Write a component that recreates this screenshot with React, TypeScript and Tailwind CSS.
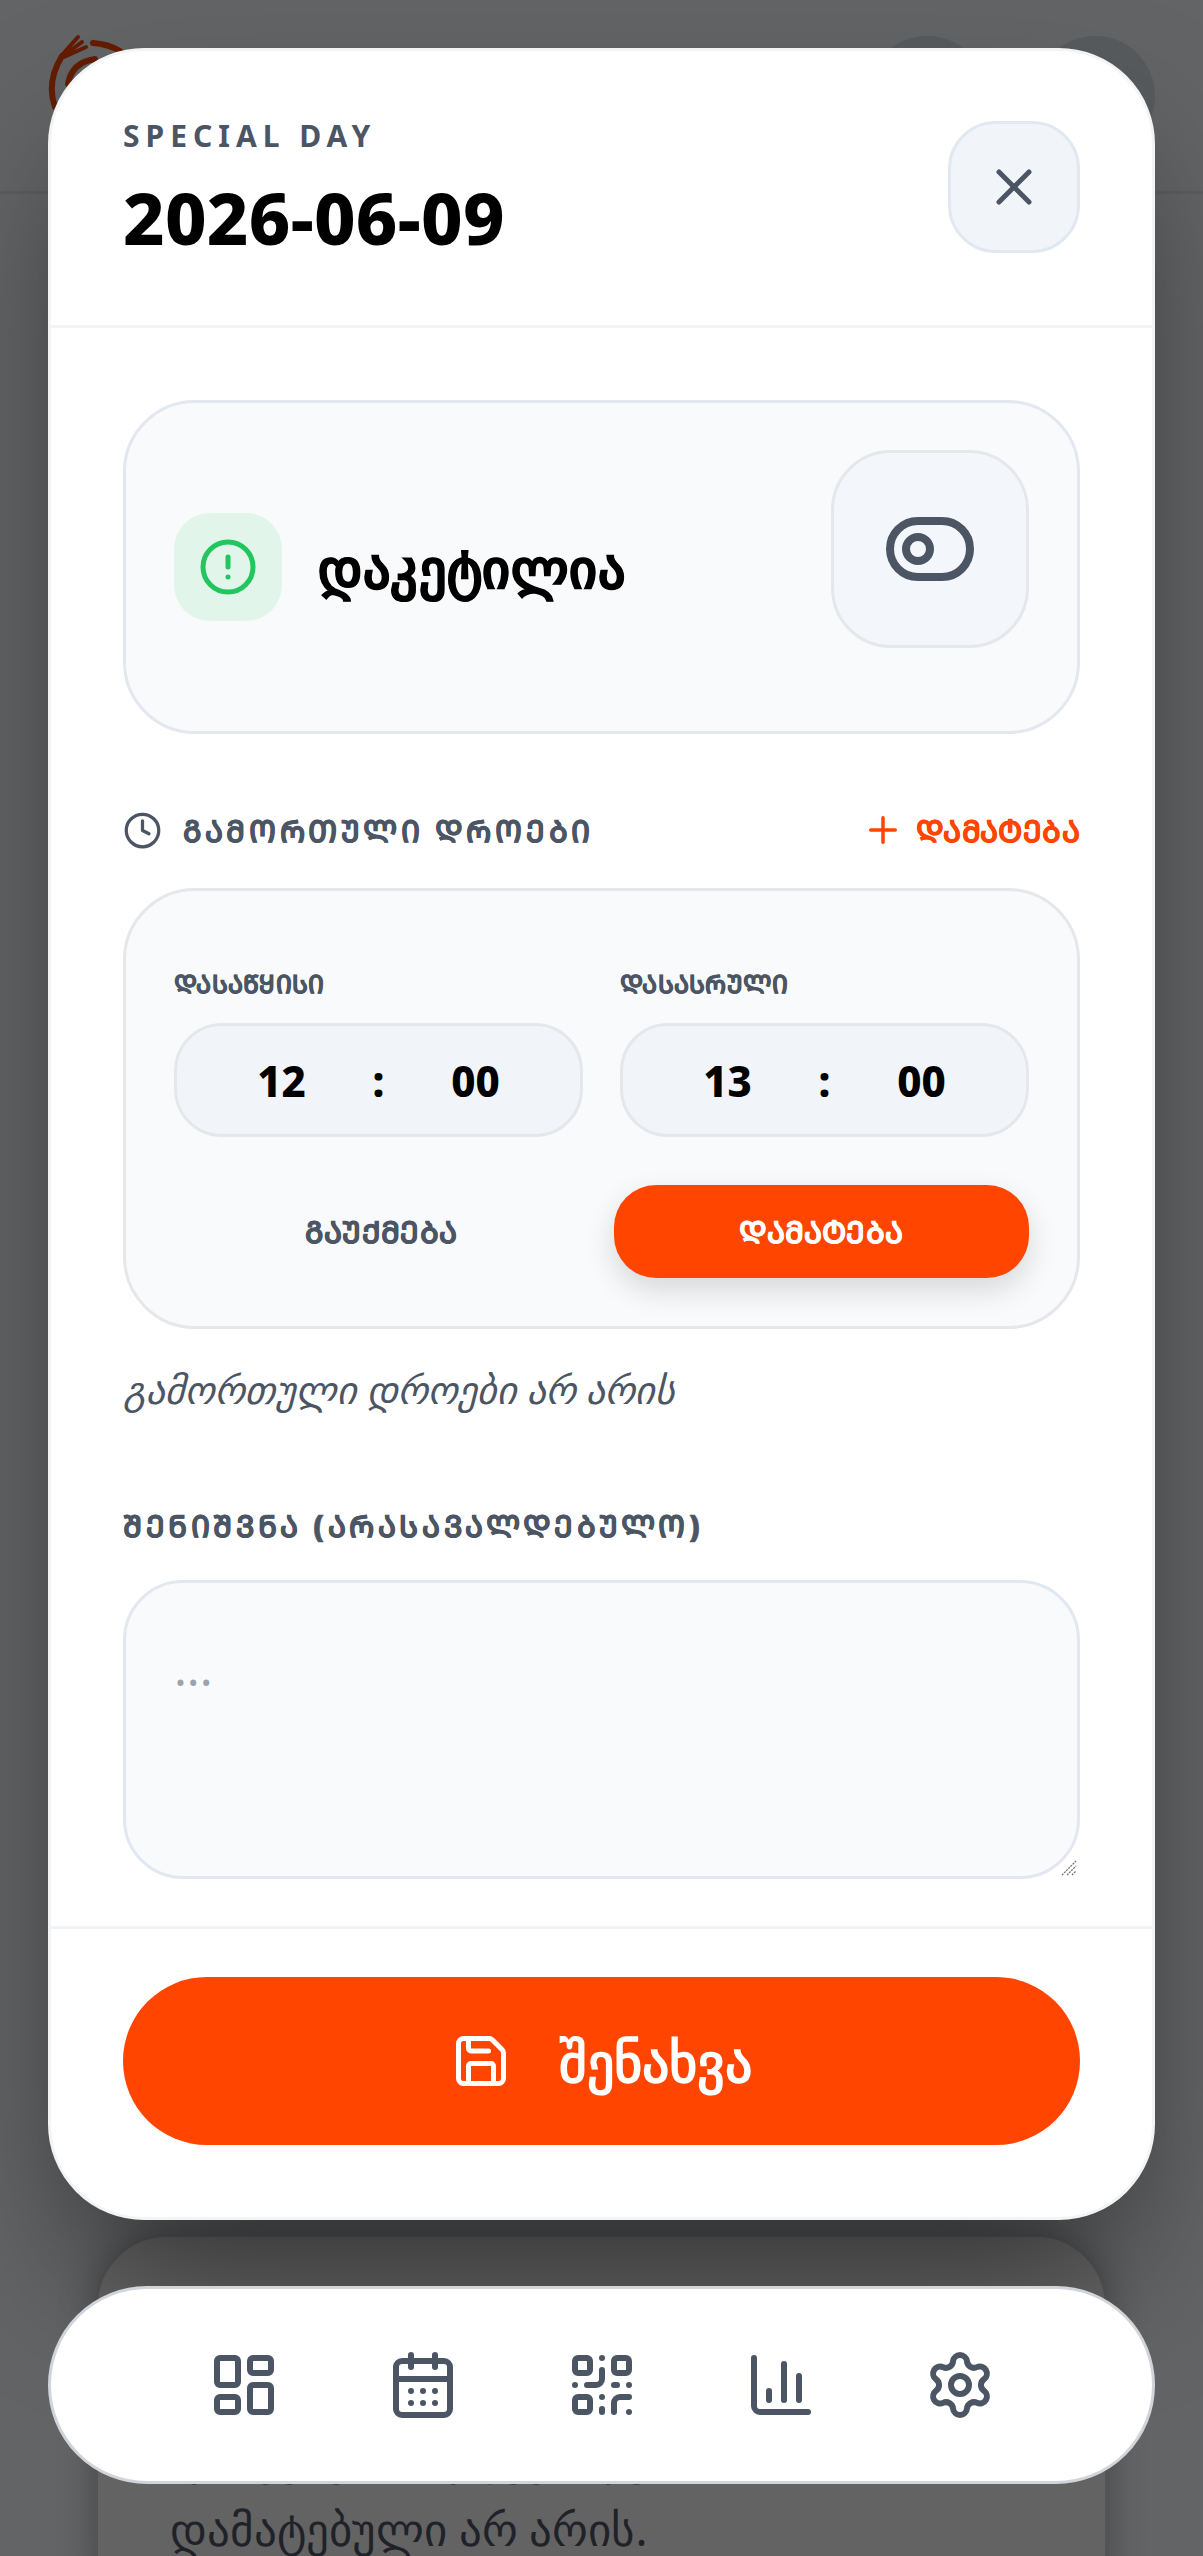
import React from 'react';
import {
  X,
  CircleAlert,
  ToggleLeft,
  Clock,
  Plus,
  Save,
  LayoutDashboard,
  CalendarDays,
  QrCode,
  ChartColumn,
  Settings,
} from 'lucide-react';

const font = "font-['Noto_Sans',sans-serif]";

function TimeField({ label, hour, minute }: { label: string; hour: string; minute: string }) {
  return (
    <div className="w-[409px]">
      <p className="text-[25px] leading-[40px] font-black tracking-[0.3px] [-webkit-text-stroke-width:0.5px] text-[#4b5563]">{label}</p>
      <div className="mt-[20px] h-[114px] rounded-[48px] border-[3px] border-[#e5e7eb] bg-[#f1f4f9] flex items-center justify-center text-[42px] font-extrabold text-black">
        <span className="w-[144px] text-center">{hour}</span>
        <span className="w-[50px] text-center">:</span>
        <span className="w-[144px] text-center">{minute}</span>
      </div>
    </div>
  );
}

export default function App() {
  const navIcons = [LayoutDashboard, CalendarDays, QrCode, ChartColumn, Settings];

  return (
    <div className={`relative w-[1203px] h-[2556px] overflow-hidden bg-[#636466] ${font}`}>
      {/* page behind the dialog */}
      <header className="h-[194px] border-b-[3px] border-[#5d5e60] px-[48px] flex items-center justify-between">
        <svg width="144" height="144" viewBox="0 0 144 144" fill="none" stroke="#641c00" strokeLinecap="round">
          <path d="M14 32 Q-2 58 7 83" strokeWidth="6" />
          <path d="M14 31 L30 13 M15 32 L34 18 M16 33 L38 23" strokeWidth="4" />
          <path d="M45 19 Q60 20 72 27" strokeWidth="6" />
          <path d="M20 60 Q24 38 47 35" strokeWidth="6" />
        </svg>
        <div className="flex gap-[48px]">
          <div className="w-[120px] h-[120px] rounded-full bg-[#585b5e]" />
          <div className="w-[120px] h-[120px] rounded-full bg-[#585b5e]" />
        </div>
      </header>
      <main className="absolute left-[95px] top-[2234px] w-[1013px] h-[400px] rounded-[72px] border-[3px] border-[#545454] bg-[#636363] shadow-[0_0_36px_rgba(0,0,0,0.3)] px-[72px] pt-[184px] text-[45px] leading-[72px] text-[#1f2228]">
        <p>დასვენების დღეები ჯერ</p>
        <p>დამატებული არ არის.</p>
      </main>

      {/* dialog */}
      <div className="absolute left-[48px] top-[48px] w-[1107px] h-[2172px] rounded-[96px] border-[3px] border-[#f3f4f6] bg-white shadow-[0_75px_150px_-36px_rgba(0,0,0,0.55)] flex flex-col">
        <div className="h-[277px] shrink-0 border-b-[3px] border-[#f1f3f6] px-[72px] pt-[70px] flex justify-between items-start">
          <div>
            <p className="text-[30px] leading-[45px] mt-[-8px] font-bold uppercase tracking-[0.2em] text-[#4b5563]">Special Day</p>
            <h1 className="mt-[11px] text-[72px] leading-[96px] font-extrabold tracking-[0.3px] text-black">2026-06-09</h1>
          </div>
          <button className="w-[132px] h-[132px] rounded-[48px] border-[3px] border-[#e2e8f0] bg-[#f1f5f9] flex items-center justify-center text-[#4b5563]">
            <X size={60} />
          </button>
        </div>

        <div className="flex-1 px-[72px] pt-[72px]">
          <section className="h-[334px] rounded-[72px] border-[3px] border-[#e2e8f0] bg-[#f8fafc] px-[48px] flex items-center justify-between">
            <div className="flex items-center gap-[36px]">
              <div className="w-[108px] h-[108px] rounded-[36px] bg-[#e2f5ea] flex items-center justify-center text-[#22c55e]">
                <CircleAlert size={60} />
              </div>
              <p className="text-[54px] font-black tracking-[0.7px] [-webkit-text-stroke-width:1px] text-black">დაკეტილია</p>
            </div>
            <button className="mb-[36px] w-[198px] h-[198px] rounded-[60px] border-[3px] border-[#e5e7eb] bg-[#f3f6fa] flex items-center justify-center text-[#4b5563]">
              <ToggleLeft size={96} />
            </button>
          </section>

          <div className="mt-[72px] h-[48px] flex items-center justify-between">
            <div className="flex items-center gap-[21px] text-[#4b5563]">
              <Clock size={39} />
              <span className="text-[30px] font-black tracking-[3.7px] [-webkit-text-stroke-width:0.5px]">ᲒᲐᲛᲝᲠᲗᲣᲚᲘ ᲓᲠᲝᲔᲑᲘ</span>
            </div>
            <div className="flex items-center gap-[12px] text-[#ff4500]">
              <Plus size={42} />
              <span className="text-[30px] font-black tracking-[0.4px] [-webkit-text-stroke-width:0.5px]">ᲓᲐᲛᲐᲢᲔᲑᲐ</span>
            </div>
          </div>

          <section className="mt-[34px] h-[441px] rounded-[72px] border-[3px] border-[#e5e7eb] bg-[#f9fafb] px-[48px] pt-[72px]">
            <div className="flex justify-between">
              <TimeField label="ᲓᲐᲡᲐᲬᲧᲘᲡᲘ" hour="12" minute="00" />
              <TimeField label="ᲓᲐᲡᲐᲡᲠᲣᲚᲘ" hour="13" minute="00" />
            </div>
            <div className="mt-[48px] flex items-center justify-between">
              <button className="w-[415px] text-[30px] font-black tracking-[0.4px] [-webkit-text-stroke-width:0.5px] text-[#4b5563]">ᲒᲐᲣᲥᲛᲔᲑᲐ</button>
              <button className="w-[415px] h-[93px] rounded-[42px] bg-[#ff4500] text-[30px] font-black tracking-[0.4px] [-webkit-text-stroke-width:0.5px] text-white shadow-[0_12px_30px_rgba(0,0,0,0.14)]">ᲓᲐᲛᲐᲢᲔᲑᲐ</button>
            </div>
          </section>

          <p className="mt-[33px] text-[38.25px] leading-[54px] italic text-[#4b5563]">გამორთული დროები არ არის</p>

          <p className="mt-[87px] text-[30px] leading-[45px] font-black tracking-[3.6px] [-webkit-text-stroke-width:0.5px] text-[#4b5563]">ᲨᲔᲜᲘᲨᲕᲜᲐ (ᲐᲠᲐᲡᲐᲕᲐᲚᲓᲔᲑᲣᲚᲝ)</p>
          <div className="relative mt-[32px]">
            <textarea
              className="block w-full h-[299px] resize-none rounded-[60px] border-[3px] border-[#e2e8f0] bg-[#f8fafc] px-[48px] py-[49px] text-[48px] placeholder:text-[#9ca3af] outline-none"
              placeholder="..."
            />
            {/* the browser's resize grip, which is larger in the reference */}
            <svg className="absolute right-[3px] bottom-[3px]" width="16" height="16" viewBox="0 0 16 16" stroke="#6b6b6b" strokeWidth="1.2" strokeDasharray="2 1">
              <path d="M1 15 L15 1 M6 15 L15 6 M11 15 L15 11" />
            </svg>
          </div>
        </div>

        <div className="h-[291px] shrink-0 border-t-[3px] border-[#f1f3f6] px-[72px] pt-[48px]">
          <button className="w-full h-[168px] rounded-full bg-[#ff4500] text-white flex items-center justify-center gap-[48px]">
            <Save size={60} />
            <span className="text-[54px] font-bold">შენახვა</span>
          </button>
        </div>
      </div>

      {/* bottom nav */}
      <nav className="absolute left-[48px] top-[2286px] w-[1107px] h-[198px] rounded-full border-[3px] border-[#d1d5db] bg-white flex items-center justify-center gap-[107px] text-[#4b5563]">
        {navIcons.map((Icon, i) => (
          <Icon key={i} size={72} />
        ))}
      </nav>
    </div>
  );
}
